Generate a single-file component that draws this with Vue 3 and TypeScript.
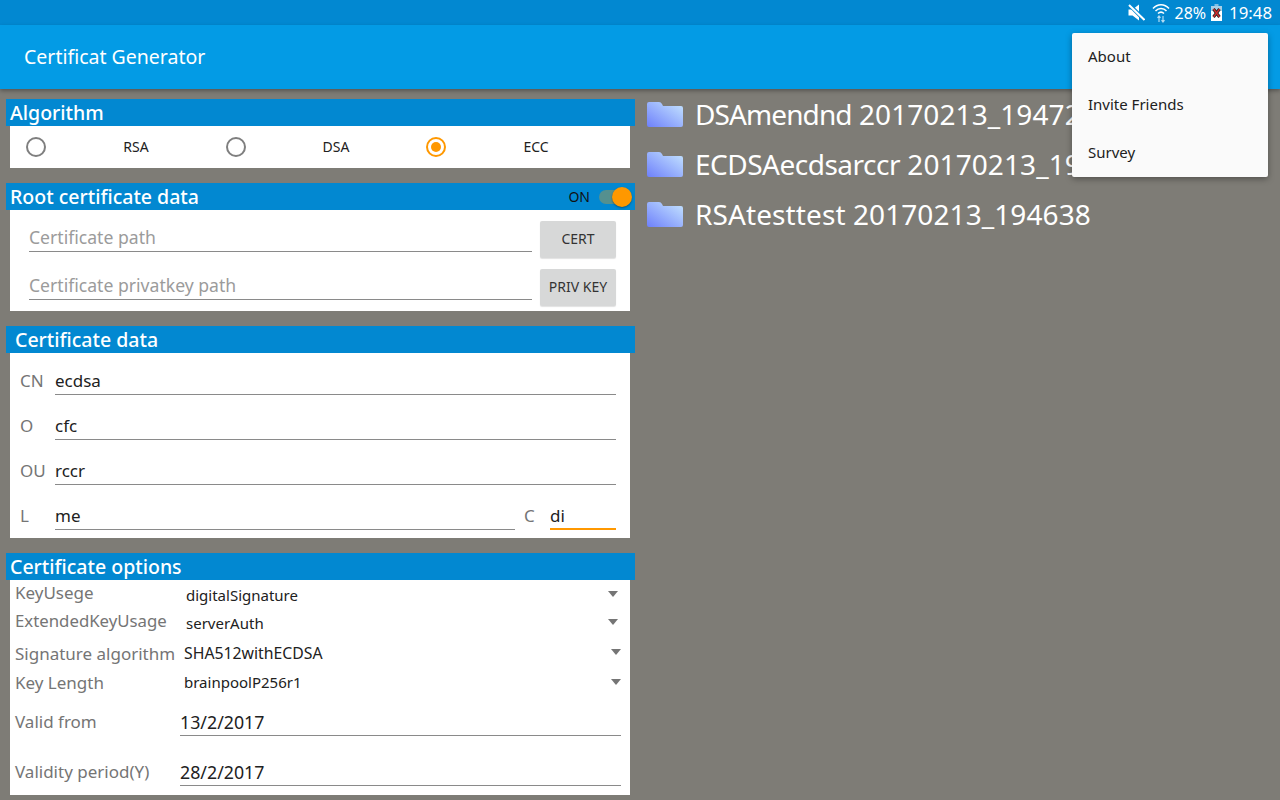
<script setup lang="ts">
const algos = [
  { name: 'RSA', on: false },
  { name: 'DSA', on: false },
  { name: 'ECC', on: true },
]
const dn = [
  { label: 'CN', value: 'ecdsa' },
  { label: 'O', value: 'cfc' },
  { label: 'OU', value: 'rccr' },
]
const files = [
  { name: 'DSAmendnd', stamp: '20170213_19472', track: -0.9 },
  { name: 'ECDSAecdsarccr', stamp: '20170213_19', track: -0.5 },
  { name: 'RSAtesttest', stamp: '20170213_194638', track: 0.1 },
]
const menu = ['About', 'Invite Friends', 'Survey']
</script>

<template>
  <div class="screen">
    <div class="status">
      <svg class="mute" width="17" height="17" viewBox="0 0 17 17">
        <path d="M0.500 5.500h4l6.500-5v16l-6.500-5h-4z" fill="#fff" />
        <path d="M1 0.500l16 16" stroke="#0288d1" stroke-width="4" />
        <path d="M1 1l15.500 15" stroke="#fff" stroke-width="2" />
      </svg>
      <svg class="wifi" width="18" height="20" viewBox="0 0 18 20" fill="none" stroke="#fff">
        <path d="M1 5.500c4.500-5 11.500-5 16 0" stroke-width="1.500" />
        <path d="M3.500 8c3-3.200 8-3.200 11 0" stroke-width="1.500" />
        <path d="M6 10.500c1.700-1.600 4.300-1.600 6 0" stroke-width="1.500" />
        <path d="M7 13v6M5.500 14.800l1.500-1.800 1.500 1.800M11 19v-6M9.500 17.200l1.500 1.800 1.500-1.800" stroke="#b3dcf3" stroke-width="1.200" />
      </svg>
      <span class="pct">28%</span>
      <svg class="batt" width="11" height="17" viewBox="0 0 11 17">
        <rect x="3.500" y="0" width="4" height="2" fill="#7fbfe6" />
        <rect x="0" y="2" width="11" height="5" fill="#a9cfe6" />
        <rect x="0" y="7" width="11" height="10" fill="#fff" />
        <path d="M2.500 5l6 8M8.500 5l-6 8" stroke="#222" stroke-width="3" />
        <path d="M2.500 5l6 8M8.500 5l-6 8" stroke="#d32f2f" stroke-width="1.300" />
      </svg>
      <span class="clock">19:48</span>
    </div>

    <header class="appbar">Certificat Generator</header>

    <main class="content">
      <section class="left">
        <div class="head">Algorithm</div>
        <div class="body algo">
          <div v-for="a in algos" :key="a.name" class="algo-item">
            <span class="radio" :class="{ checked: a.on }"></span>
            <span class="algo-name">{{ a.name }}</span>
          </div>
        </div>

        <div class="head">
          <span>Root certificate data</span>
          <span class="toggle-wrap">
            <span class="on">ON</span>
            <span class="track"><span class="thumb"></span></span>
          </span>
        </div>
        <div class="body root">
          <div class="root-row">
            <div class="input hint">Certificate path</div>
            <div class="btn">CERT</div>
          </div>
          <div class="root-row">
            <div class="input hint">Certificate privatkey path</div>
            <div class="btn">PRIV KEY</div>
          </div>
        </div>

        <div class="head indent">Certificate data</div>
        <div class="body data">
          <div v-for="d in dn" :key="d.label" class="data-row">
            <span class="lbl">{{ d.label }}</span>
            <div class="input val">{{ d.value }}</div>
          </div>
          <div class="data-row">
            <span class="lbl">L</span>
            <div class="input val grow">me</div>
            <span class="lbl c">C</span>
            <div class="input val focus">di</div>
          </div>
        </div>

        <div class="head">Certificate options</div>
        <div class="body opts">
          <div class="opt r1">
            <span class="opt-l">KeyUsege</span>
            <span class="opt-v v1">digitalSignature</span>
            <span class="caret"></span>
          </div>
          <div class="opt r2">
            <span class="opt-l narrow">ExtendedKeyUsage</span>
            <span class="opt-v v1">serverAuth</span>
            <span class="caret"></span>
          </div>
          <div class="opt r3">
            <span class="opt-l">Signature algorithm</span>
            <span class="opt-v v2 wide">SHA512withECDSA</span>
            <span class="caret c2"></span>
          </div>
          <div class="opt r4">
            <span class="opt-l">Key Length</span>
            <span class="opt-v v2">brainpoolP256r1</span>
            <span class="caret c2"></span>
          </div>
          <div class="date r5">
            <span class="opt-l">Valid from</span>
            <div class="input val d">13/2/2017</div>
          </div>
          <div class="date r6">
            <span class="opt-l">Validity period(Y)</span>
            <div class="input val d">28/2/2017</div>
          </div>
        </div>
      </section>

      <section class="right">
        <div v-for="f in files" :key="f.name" class="file">
          <svg width="36" height="25" viewBox="0 0 36 25">
            <defs>
              <linearGradient id="fold" x1="0" y1="1" x2="1" y2="0">
                <stop offset="0" stop-color="#6e80fb" />
                <stop offset="1" stop-color="#c6e6ff" />
              </linearGradient>
            </defs>
            <path d="M2 0h10q2 0 3 2l1 2h18q2 0 2 2v17q0 2-2 2h-32q-2 0-2-2v-21q0-2 2-2z" fill="url(#fold)" />
          </svg>
          <span class="fname"><span :style="{ letterSpacing: f.track + 'px' }">{{ f.name }}</span> {{ f.stamp }}</span>
        </div>
      </section>
    </main>

    <nav class="menu">
      <div v-for="m in menu" :key="m" class="menu-item">{{ m }}</div>
    </nav>
  </div>
</template>

<style>
html, body { margin: 0; background: #7e7c76; }
</style>

<style scoped>
.screen {
  position: relative;
  width: 1280px;
  height: 800px;
  overflow: hidden;
  background: #7e7c76;
  font-family: "Noto Sans", sans-serif;
  display: flex;
  flex-direction: column;
}
.status {
  height: 25px;
  flex: none;
  background: #0288d1;
  display: flex;
  align-items: center;
  justify-content: flex-end;
  padding-right: 8px;
  color: #fff;
  font-size: 16px;
}
.mute { margin-right: 7px; }
.wifi { margin-right: 4px; }
.pct { margin-right: 5px; }
.batt { margin-right: 7px; }
.clock { font-size: 16.800px; }
.appbar {
  height: 64px;
  flex: none;
  background: #039be5;
  color: #fff;
  font-size: 19.500px;
  line-height: 64px;
  padding-left: 24px;
  box-shadow: 0 2px 4px rgba(0, 0, 0, 0.3);
  position: relative;
}
.content { flex: 1; display: flex; min-height: 0; }
.left { width: 647px; flex: none; padding: 10px 0 0 6px; box-sizing: border-box; }
.head {
  width: 629px;
  height: 27px;
  background: #0288d1;
  color: #fff;
  font-size: 19.500px;
  font-weight: 500;
  line-height: 27px;
  padding-left: 4px;
  box-sizing: border-box;
  display: flex;
  justify-content: space-between;
  align-items: center;
}
.head.indent { padding-left: 9px; }
.body { width: 620px; margin-left: 4px; background: #fff; margin-bottom: 15px; box-sizing: border-box; }
.algo { height: 42px; display: flex; align-items: center; padding-left: 16px; }
.algo-item { width: 200px; display: flex; align-items: center; }
.radio {
  width: 20px;
  height: 20px;
  box-sizing: border-box;
  border: 2px solid #7f7f7f;
  border-radius: 50%;
  flex: none;
  display: flex;
  align-items: center;
  justify-content: center;
}
.radio.checked { border-color: #ff9800; }
.radio.checked::after { content: ""; width: 10px; height: 10px; border-radius: 50%; background: #ff9800; }
.algo-name { flex: 1; text-align: center; font-size: 14px; color: #212121; line-height: 18px; margin-top: -1px; }
.toggle-wrap { display: flex; align-items: center; margin-right: 4px; font-weight: 400; }
.on { font-size: 14px; color: #111; margin-right: 9px; }
.track { width: 32px; height: 14px; border-radius: 7px; background: #55908f; position: relative; display: block; }
.thumb {
  position: absolute;
  right: -1px;
  top: -3px;
  width: 20px;
  height: 20px;
  border-radius: 50%;
  background: #ff9800;
  box-shadow: 0 1px 2px rgba(0, 0, 0, 0.35);
}
.root { height: 101px; padding: 11px 14px 0 19px; display: flex; flex-direction: column; gap: 11px; }
.root-row { display: flex; height: 37px; gap: 8px; }
.input {
  flex: 1;
  box-sizing: border-box;
  border-bottom: 1px solid #8a8a8a;
  color: #212121;
  font-size: 17px;
}
.hint { color: #9b9b9b; height: 31px; line-height: 33px; font-size: 17.600px; }
.btn {
  width: 76px;
  height: 37px;
  background: #d7d8d8;
  border-radius: 2px;
  box-shadow: 0 1px 1px rgba(0, 0, 0, 0.12);
  font-size: 14px;
  color: #333;
  display: flex;
  align-items: center;
  justify-content: center;
  padding-bottom: 3px;
  box-sizing: border-box;
}
.data { height: 185px; padding: 12px 14px 0 10px; display: flex; flex-direction: column; gap: 15px; }
.data-row { display: flex; height: 30px; align-items: flex-end; }
.lbl { width: 35px; flex: none; color: #757575; font-size: 17px; line-height: 32px; height: 30px; }
.lbl.c { width: 26px; margin-left: 9px; }
.val { height: 30px; line-height: 32px; }
.grow { flex: 1; }
.focus { flex: none; width: 66px; border-bottom: 2px solid #ff9800; }
.opts { height: 215px; margin-bottom: 0; position: relative; padding-left: 5px; padding-right: 9px; color: #212121; }
.opt { display: flex; align-items: center; height: 28px; position: relative; }
.r1 { height: 28px; }
.r3 { margin-top: 2px; height: 30px; }
.r4 { height: 29px; }
.opt-l { color: #757575; font-size: 17px; white-space: nowrap; }
.narrow { font-size: 16.800px; }
.opt-v { position: absolute; font-size: 15px; white-space: nowrap; }
.v1 { left: 171px; top: 5px; }
.v2 { left: 169px; top: 4px; }
.wide { font-size: 15.800px; }
.r1 .opt-l { margin-top: -3px; }
.r2 .opt-l { margin-top: -3px; }
.caret {
  position: absolute;
  right: 3px;
  top: 11px;
  width: 0;
  height: 0;
  border-left: 5px solid transparent;
  border-right: 5px solid transparent;
  border-top: 6px solid #757575;
}
.c2 { right: 0; top: 11px; }
.date { display: flex; align-items: flex-end; height: 30px; }
.r5 { margin-top: 9px; }
.r6 { margin-top: 20px; }
.date .opt-l { width: 165px; flex: none; line-height: 32px; height: 30px; }
.d { flex: 1; font-size: 17.800px; }
.right { flex: 1; min-width: 0; }
.file { display: flex; align-items: center; height: 50px; gap: 12px; white-space: nowrap; }
.file svg { flex: none; margin-top: 1px; }
.fname { color: #fff; font-size: 28px; letter-spacing: 0.080px; }
.menu {
  position: absolute;
  left: 1072px;
  top: 33px;
  width: 196px;
  height: 144px;
  background: #fafafa;
  border-radius: 2px;
  box-shadow: 0 2px 6px rgba(0, 0, 0, 0.35);
}
.menu-item { height: 48px; line-height: 47px; padding-left: 16px; font-size: 15px; color: #212121; }
</style>
